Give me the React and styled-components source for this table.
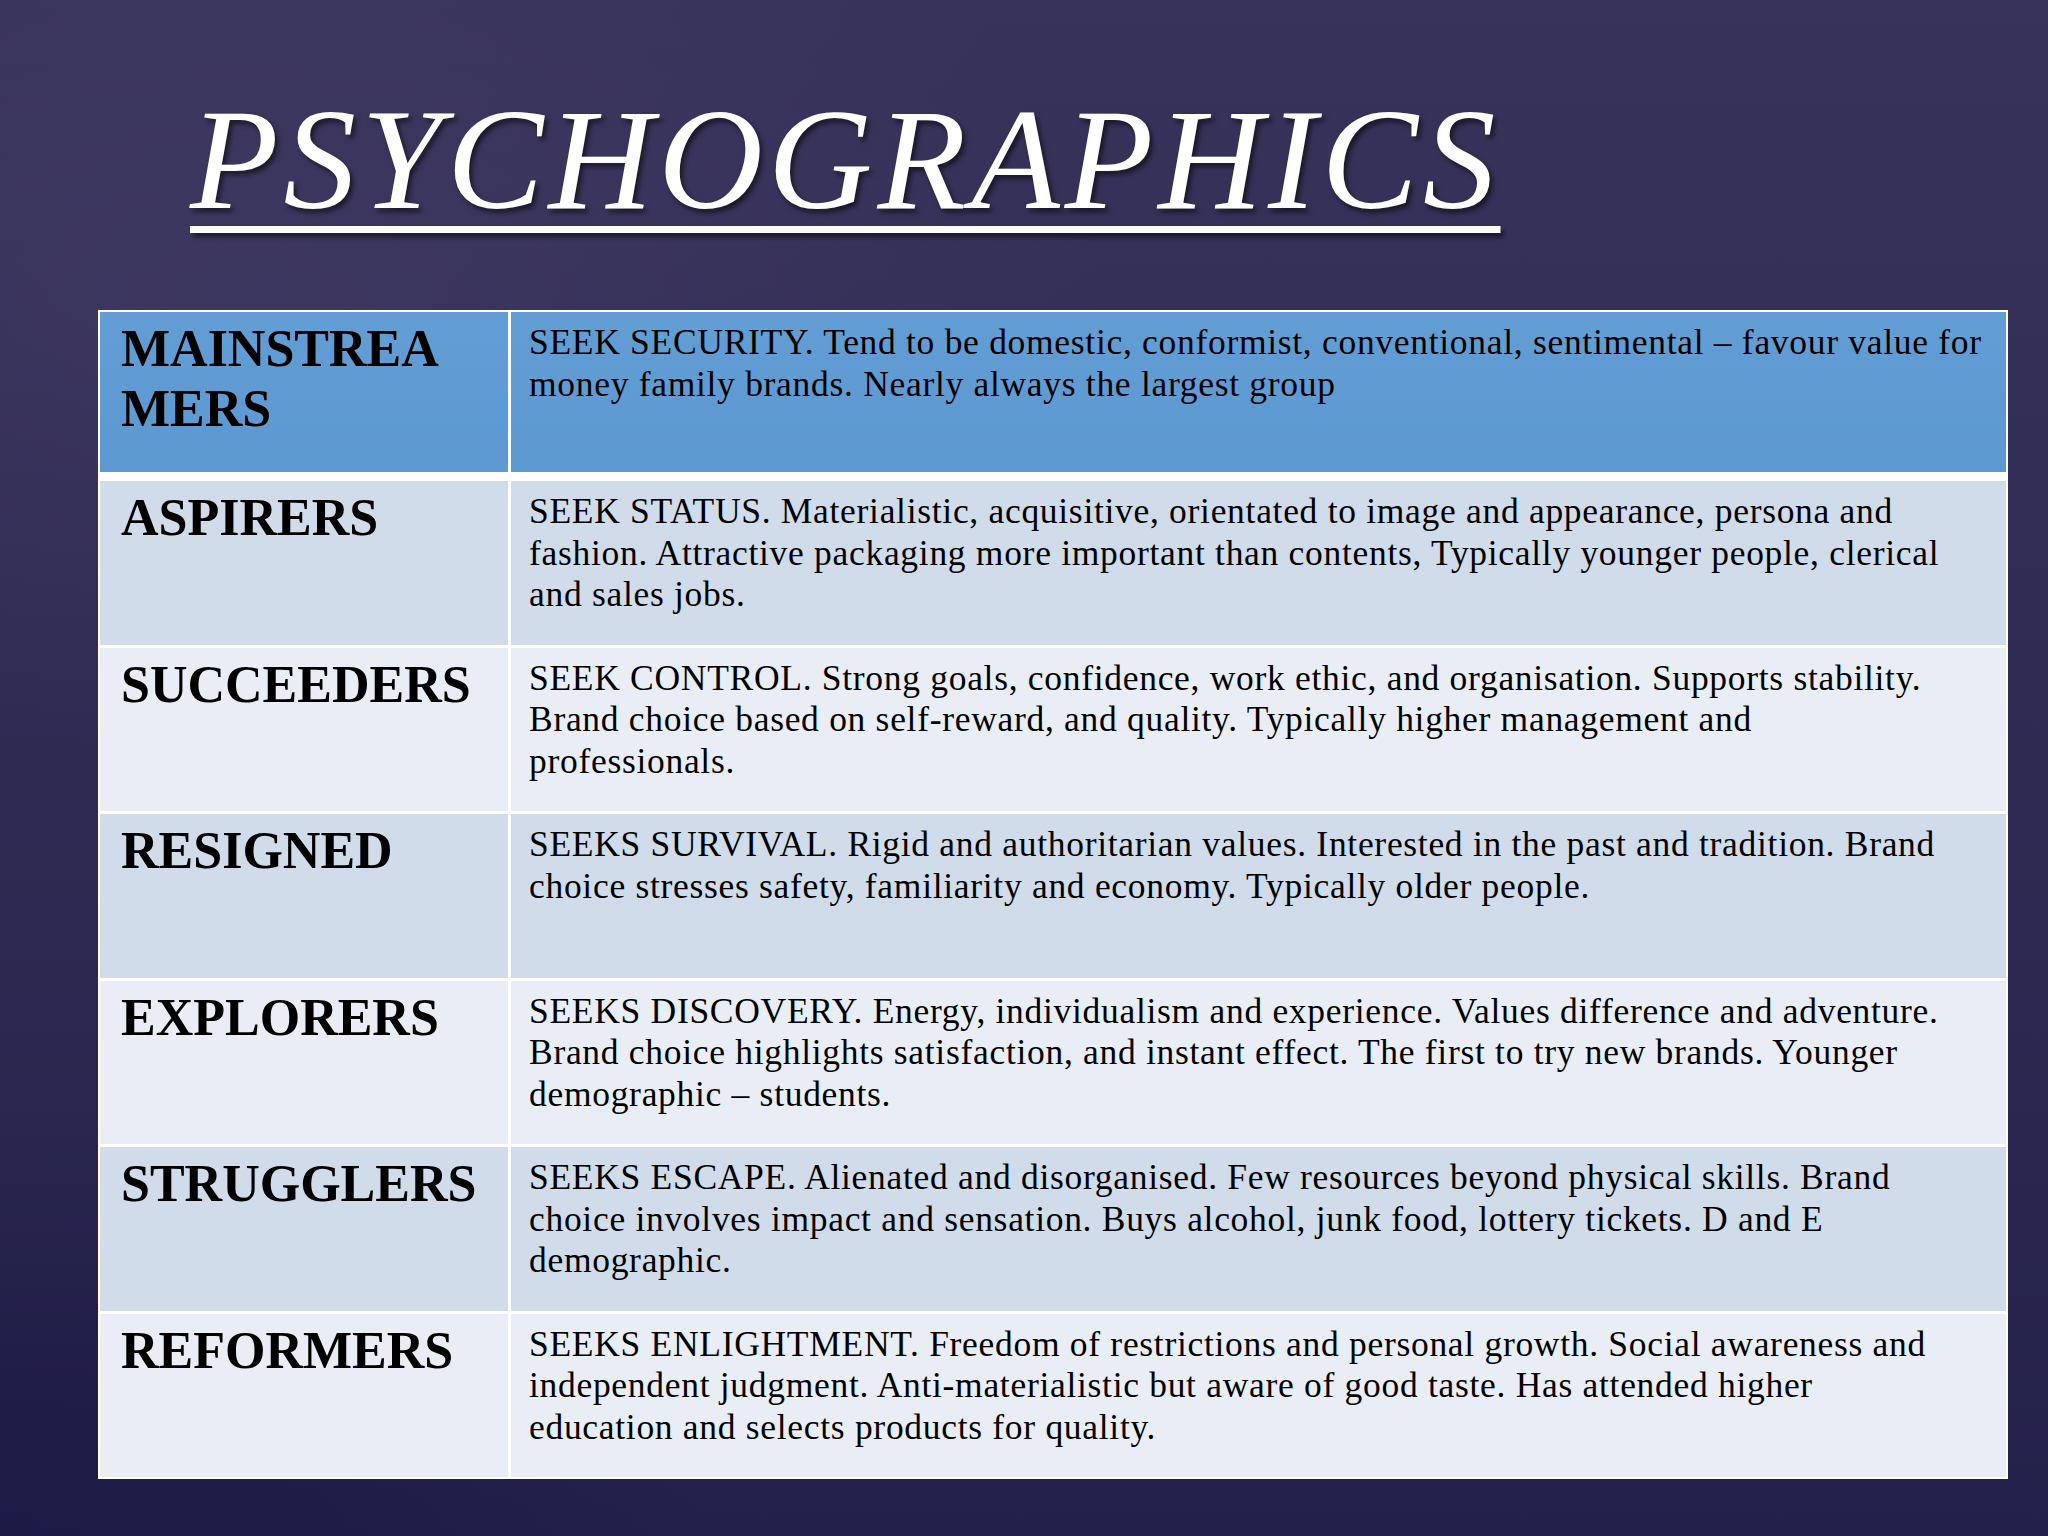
import React from "react";
import styled, { createGlobalStyle } from "styled-components";

const segments = [
  {
    name: "MAINSTREAMERS",
    lines: [
      "SEEK SECURITY. Tend to be domestic, conformist, conventional, sentimental – favour value for",
      "money family brands. Nearly always the largest group",
    ],
  },
  {
    name: "ASPIRERS",
    lines: [
      "SEEK STATUS. Materialistic, acquisitive, orientated to image and appearance, persona and",
      "fashion. Attractive packaging more important than contents, Typically younger people, clerical",
      "and sales jobs.",
    ],
  },
  {
    name: "SUCCEEDERS",
    lines: [
      "SEEK CONTROL. Strong goals, confidence, work ethic, and organisation. Supports stability.",
      "Brand choice based on self-reward, and quality. Typically higher management and",
      "professionals.",
    ],
  },
  {
    name: "RESIGNED",
    lines: [
      "SEEKS SURVIVAL. Rigid and authoritarian values. Interested in the past and tradition. Brand",
      "choice stresses safety, familiarity and economy. Typically older people.",
    ],
  },
  {
    name: "EXPLORERS",
    lines: [
      "SEEKS DISCOVERY. Energy, individualism and experience. Values difference and adventure.",
      "Brand choice highlights satisfaction, and instant effect. The first to try new brands. Younger",
      "demographic – students.",
    ],
  },
  {
    name: "STRUGGLERS",
    lines: [
      "SEEKS ESCAPE. Alienated and disorganised. Few resources beyond physical skills. Brand",
      "choice involves impact and sensation. Buys alcohol, junk food, lottery tickets. D and E",
      "demographic.",
    ],
  },
  {
    name: "REFORMERS",
    lines: [
      "SEEKS ENLIGHTMENT. Freedom of restrictions and personal growth. Social awareness and",
      "independent judgment. Anti-materialistic but aware of good taste. Has attended higher",
      "education and selects products for quality.",
    ],
  },
];

const toneFor = (index) => {
  if (index === 0) return "head";
  return index % 2 === 1 ? "dark" : "light";
};

export default function App() {
  return (
    <>
      <GlobalStyle />
      <Slide>
        <Title>PSYCHOGRAPHICS</Title>
        <Table>
          {segments.map((seg, i) => (
            <React.Fragment key={seg.name}>
              <LabelCell $tone={toneFor(i)}>{seg.name}</LabelCell>
              <DescCell $tone={toneFor(i)}>
                {seg.lines.map((line) => (
                  <Line key={line}>{line}</Line>
                ))}
              </DescCell>
            </React.Fragment>
          ))}
        </Table>
      </Slide>
    </>
  );
}

const GlobalStyle = createGlobalStyle`
  html, body {
    margin: 0;
    padding: 0;
  }
  body {
    width: 2048px;
    height: 1536px;
    overflow: hidden;
    background: #2c284f;
  }
`;

const Slide = styled.div`
  box-sizing: border-box;
  width: 2048px;
  height: 1536px;
  padding: 87px 40px 0 98px;
  display: flex;
  flex-direction: column;
  background:
    radial-gradient(ellipse 60% 45% at 12% 18%, rgba(72, 66, 108, 0.4), transparent 70%),
    radial-gradient(ellipse 50% 40% at 0% 100%, rgba(24, 22, 66, 0.6), transparent 70%),
    linear-gradient(180deg, #38335a 0%, #312c54 40%, #2a264f 75%, #23204b 100%);
`;

const Title = styled.h1`
  align-self: flex-start;
  margin: 0 0 0 92px;
  font-family: "Liberation Serif", "Times New Roman", serif;
  font-style: italic;
  font-weight: normal;
  font-size: 145px;
  line-height: 1;
  letter-spacing: 5px;
  color: #ffffff;
  text-decoration: underline;
  text-decoration-thickness: 7px;
  text-underline-offset: 18px;
  text-shadow: 3px 4px 5px rgba(0, 0, 0, 0.55);
`;

const Table = styled.div`
  box-sizing: border-box;
  width: 1910px;
  margin-top: 78px;
  padding: 2px;
  display: grid;
  grid-template-columns: 408px minmax(0, 1fr);
  grid-template-rows: 166px repeat(6, 163.5px);
  gap: 3px;
  background: #ffffff;
`;

const tones = {
  head: "linear-gradient(180deg, #629ed4 0%, #5d99d1 100%)",
  dark: "#d0dcea",
  light: "#e9eef6",
};

const Cell = styled.div`
  box-sizing: border-box;
  overflow: hidden;
  background: ${(p) => tones[p.$tone]};
  border-bottom: ${(p) => (p.$tone === "head" ? "6px solid #ffffff" : "none")};
  color: #000000;
  font-family: "Liberation Serif", "Times New Roman", serif;
`;

const LabelCell = styled(Cell)`
  padding: 7px 24px 0 21px;
  font-size: 52px;
  font-weight: bold;
  line-height: 60px;
  word-break: break-all;
`;

const DescCell = styled(Cell)`
  padding: 10px 18px 0 18px;
  font-size: 35.5px;
  line-height: 41.5px;
  letter-spacing: 0.7px;
`;

const Line = styled.span`
  display: block;
  white-space: nowrap;
`;
